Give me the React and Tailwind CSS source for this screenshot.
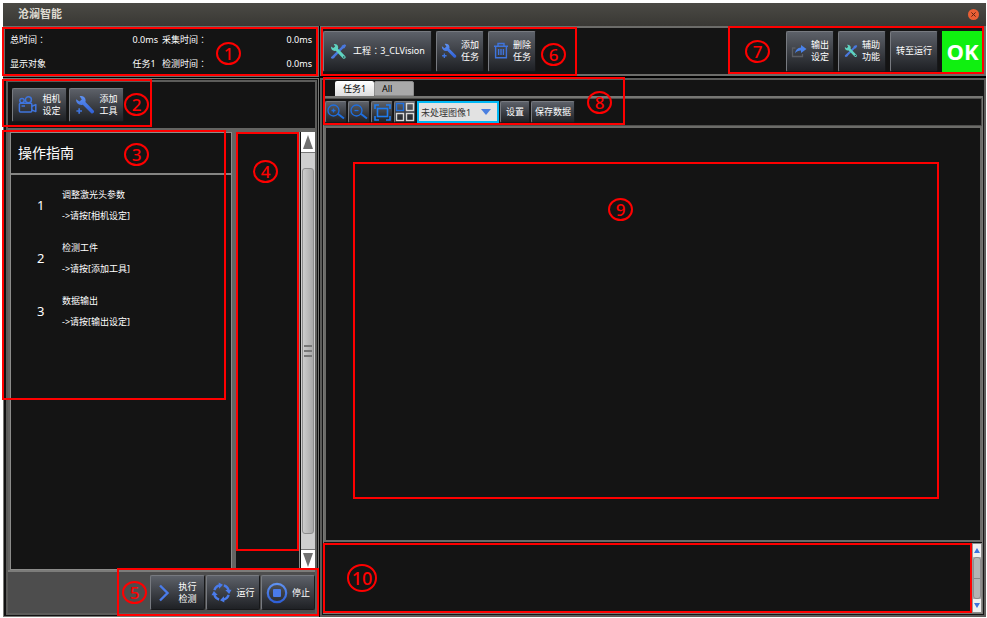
import React from "react";

const FONT = "font-['Noto_Sans','Noto_Sans_CJK_SC',sans-serif]";

/* ---------- icons ---------- */

function Blue({ id }) {
  return (
    <defs>
      <linearGradient id={id} x1="0" y1="0" x2="0" y2="1">
        <stop offset="0" stopColor="#5f92f2" />
        <stop offset="1" stopColor="#2f5fd6" />
      </linearGradient>
    </defs>
  );
}

function CameraIcon() {
  return (
    <svg viewBox="0 0 20 18" className="h-[18px] w-5 shrink-0" fill="none" stroke="#3f74dc" strokeWidth="1.5">
      <circle cx="4" cy="4.600" r="2.200" />
      <circle cx="10.400" cy="3.800" r="3" />
      <rect x="1.400" y="7.200" width="12.400" height="8.800" rx="1" />
      <path d="M13.800 10.200l4-1.600v7l-4-1.600" strokeLinejoin="round" />
      <path d="M3.500 10h3.500" />
    </svg>
  );
}

function WrenchIcon({ className, id }) {
  return (
    <svg viewBox="0 0 20 20" className={className}>
      <Blue id={id} />
      <path
        fill={`url(#${id})`}
        d="M1.2 4.2 4.4 6.6 6.8 4.4 4.6 1.1C7.4.4 10.3 1.8 10.6 5c.1.8 0 1.500-.2 2.100l8.200 8.300c1.600 1.700-.9 4.200-2.600 2.600L7.800 9.700C4.200 10.900.6 8 1.200 4.200z"
      />
      <path d="M4.200 13.200v5.600M1.400 16h5.600" stroke="#3f74dc" strokeWidth="1.700" />
    </svg>
  );
}

function ToolsIcon({ className }) {
  return (
    <svg viewBox="0 0 20 20" className={className}>
      <path d="M17.500 1.500 19 3l-2 3.200-1.600.4L6 16.200c-.8 2.300-4 2.900-4.800 1.400-.6-1.200 1-1.900 2.600-3.600l9.700-9.500.6-1.500z" fill="#4a78dd" />
      <path
        fill="#5fd3c0"
        d="M1.200 4.200 3.800 6 6 4 4.400 1.200C7 .6 9.300 2 9.600 4.800c.1.800 0 1.300-.2 1.900l8.400 8.500c1.900 2-.9 4.600-2.800 2.800L6.800 9.200C3.600 10.200.8 7.600 1.200 4.200z"
      />
      <circle cx="16.200" cy="16.400" r=".9" fill="#33363b" />
    </svg>
  );
}

function TrashIcon() {
  return (
    <svg viewBox="0 0 16 18" className="h-[18px] w-4 shrink-0" fill="none" stroke="#3f74dc" strokeWidth="1.400">
      <path d="M1 4.200h14M5 4V1.500h6V4M2.600 4.500v11.300h10.800V4.500M5.600 7v6M8 7v6M10.400 7v6" />
    </svg>
  );
}

function ExportIcon() {
  return (
    <svg viewBox="0 0 16 14" className="h-3.5 w-4 shrink-0" fill="none">
      <path d="M4.500 4H1.500v8.500h10V10" stroke="#5b5e64" strokeWidth="1.300" />
      <path d="M4 9.500C4.500 5.800 6.500 3.800 10 3.600V1l5.500 4-5.500 4V6.600C7.600 6.500 5.600 7.300 4 9.500z" fill="#4a82ea" />
    </svg>
  );
}

function ChevronIcon() {
  return (
    <svg viewBox="0 0 12 18" className="h-[18px] w-3 shrink-0" fill="none" stroke="#4a7bea" strokeWidth="2.400">
      <path d="M2 1.500 9.500 9 2 16.500" />
    </svg>
  );
}

function CycleIcon() {
  return (
    <svg viewBox="0 0 22 22" className="size-[21px] shrink-0" fill="none">
      <g stroke="#4a7bea" strokeWidth="2.400">
        <path d="M3.500 8.500A8 8 0 0 1 8.500 3.500" />
        <path d="M13.500 3.500A8 8 0 0 1 18.500 8.500" />
        <path d="M18.500 13.500A8 8 0 0 1 13.500 18.500" />
        <path d="M8.500 18.500A8 8 0 0 1 3.500 13.500" />
      </g>
      <g fill="#4a7bea">
        <path d="M8 .5 12.500 3 8.500 7z" />
        <path d="M21.500 8 19 12.500 15 8.500z" />
        <path d="M14 21.500 9.500 19 13.500 15z" />
        <path d="M.5 14 3 9.500 7 13.500z" />
      </g>
    </svg>
  );
}

function StopIcon() {
  return (
    <svg viewBox="0 0 22 22" className="size-[22px] shrink-0">
      <Blue id="stop" />
      <circle cx="11" cy="11" r="9.200" fill="none" stroke="url(#stop)" strokeWidth="2.200" />
      <rect x="7" y="7" width="8" height="8" rx="1" fill="#4a7bea" />
    </svg>
  );
}

function MagnifierIcon({ plus }) {
  return (
    <svg viewBox="0 0 18 16" className="h-4 w-[18px] shrink-0" fill="none" stroke="#1f6fe0" strokeWidth="1.300">
      <circle cx="6.500" cy="6.500" r="5.500" />
      <path d={plus ? "M4.500 6.500h4M6.500 4.500v4" : "M4.500 6.500h4"} />
      <path d="M10.800 9.800 17 14.500" strokeWidth="2" />
    </svg>
  );
}

function FitIcon() {
  return (
    <svg viewBox="0 0 17 17" className="size-[17px] shrink-0" fill="none" stroke="#1f7cf0" strokeWidth="1.600">
      <rect x="3.500" y="4.500" width="10" height="8" />
      <path d="M1 5V1H5M12 1h4V5M16 12v4H12M5 16H1V12" />
    </svg>
  );
}

function GridIcon() {
  return (
    <svg viewBox="0 0 20 20" className="size-5 shrink-0" fill="none" strokeWidth="1.400">
      <rect x="1.500" y="1.500" width="7" height="7" stroke="#1f6fe0" />
      <g stroke="#d8d8d8">
        <rect x="11.500" y="1.500" width="7" height="7" />
        <rect x="1.500" y="11.500" width="7" height="7" />
        <rect x="11.500" y="11.500" width="7" height="7" />
      </g>
    </svg>
  );
}

/* ---------- controls ---------- */

function Btn({ className = "", children, ...rest }) {
  return (
    <button
      type="button"
      className={`flex shrink-0 items-center justify-center rounded-[2px] border border-[#17181a] border-t-[#777a80] border-l-[#777a80] bg-linear-to-b from-[#5d6169] via-[#3d4046] to-[#1f2125] text-[9px] leading-3 text-white ${className}`}
      {...rest}
    >
      {children}
    </button>
  );
}

function TwoLine({ a, b }) {
  return (
    <span className="text-left">
      {a}
      <br />
      {b}
    </span>
  );
}

function Colon() {
  return <span className="font-['Noto_Sans_CJK_TC',sans-serif]">：</span>;
}

/* numbered red callout over a region */
function Callout({ n, box, spot, size = "h-[23px] w-[25px] text-[17px]" }) {
  return (
    <div className={`pointer-events-none absolute z-10 border-2 border-[#ff0000] ${box}`}>
      <span
        className={`absolute flex items-center justify-center rounded-[50%] border-2 border-[#ff0000] font-['Noto_Sans',sans-serif] font-medium leading-none text-[#ff0000] ${size} ${spot}`}
      >
        {n}
      </span>
    </div>
  );
}

/* ---------- panels ---------- */

const STEPS = [
  ["调整激光头参数", "->请按[相机设定]"],
  ["检测工件", "->请按[添加工具]"],
  ["数据输出", "->请按[输出设定]"],
];

function Status() {
  return (
    <section className="flex h-[51px] shrink-0 border-2 border-[#6c6c69] bg-[#141414] px-[5px] text-[9px] leading-6 text-white">
      <dl className="grid w-[148px] grid-cols-[1fr_auto]">
        <dt>总时间<Colon /></dt>
        <dd>0.0ms</dd>
        <dt>显示对象</dt>
        <dd>任务1</dd>
      </dl>
      <dl className="grid flex-1 grid-cols-[1fr_auto] pl-1">
        <dt>采集时间<Colon /></dt>
        <dd>0.0ms</dd>
        <dt>检测时间<Colon /></dt>
        <dd>0.0ms</dd>
      </dl>
    </section>
  );
}

function SideScroll() {
  return (
    <div className="flex w-[14px] shrink-0 flex-col bg-[#cfcfcf]">
      <button type="button" aria-label="向上" className="flex h-[21px] items-center justify-center border-b border-[#777] bg-white">
        <svg viewBox="0 0 10 14" className="h-3.5 w-2.5"><path d="M5 0l5 14H0z" fill="#707070" /></svg>
      </button>
      <div className="flex flex-1 flex-col px-px py-[15px]">
        <div className="flex flex-1 flex-col items-center justify-center gap-[3px] rounded-[3px] border border-[#8d8d8d] bg-linear-to-r from-[#cccccc] to-[#a9a9a9]">
          <i className="h-[2px] w-2 bg-[#777]" />
          <i className="h-[2px] w-2 bg-[#777]" />
          <i className="h-[2px] w-2 bg-[#777]" />
        </div>
      </div>
      <button type="button" aria-label="向下" className="flex h-[21px] items-center justify-center border-t border-[#777] bg-white">
        <svg viewBox="0 0 10 14" className="h-3.5 w-2.5"><path d="M5 14L0 0h10z" fill="#707070" /></svg>
      </button>
    </div>
  );
}

function Sidebar() {
  return (
    <aside className="relative flex w-[317px] shrink-0 flex-col gap-px pr-px">
      <Status />
      <div className="flex flex-1 flex-col border border-[#777774] bg-[#111] py-px pr-px pl-[2px]">
        <div className="flex flex-1 flex-col border-2 border-[#5c5c5a] bg-[#141414]">
          <div className="flex h-[46px] shrink-0 items-center gap-[2px] px-1">
            <Btn className="h-[34px] w-[55px] gap-1"><CameraIcon /><TwoLine a="相机" b="设定" /></Btn>
            <Btn className="h-[34px] w-[55px] gap-1">
              <WrenchIcon id="addTool" className="size-5 shrink-0" /><TwoLine a="添加" b="工具" />
            </Btn>
          </div>
          <div className="flex flex-1 border-t-4 border-l-2 border-[#646462]">
            <section className="flex-1 border border-[#8c8c8a] bg-[#141414] text-white">
              <h2 className="border-b-2 border-[#858583] px-[7px] text-[14px] leading-[40px]">操作指南</h2>
              <ol className="pt-[9px]">
                {STEPS.map(([title, hint], i) => (
                  <li key={title} className="mb-[11px] flex items-center">
                    <span className="w-[51px] pl-[26px] text-[13px] leading-[42px]">{i + 1}</span>
                    <p className="text-[9px] leading-[21px]">{title}<br />{hint}</p>
                  </li>
                ))}
              </ol>
            </section>
            <div className="w-1 shrink-0 bg-[#646462]" />
            <div className="mr-px w-[64px] shrink-0 border-r border-[#8c8c8a] bg-[#141414]" />
            <SideScroll />
          </div>
          <div className="flex h-[43px] shrink-0 items-center justify-end gap-px border-t-2 border-[#7c7c7a] bg-[#4d4d4d]">
            <Btn className="h-[35px] w-[55px] gap-2"><ChevronIcon /><TwoLine a="执行" b="检测" /></Btn>
            <Btn className="h-[35px] w-[54px] gap-1"><CycleIcon />运行</Btn>
            <Btn className="h-[35px] w-[54px] gap-1"><StopIcon />停止</Btn>
          </div>
        </div>
      </div>
      <Callout n="1" box="-left-px top-px h-[49px] w-[316px]" spot="left-[212px] top-[13px]" />
      <Callout n="2" box="-left-px top-[53px] h-[48px] w-[150px]" spot="left-[120px] top-3" />
      <Callout n="3" box="-left-px top-[104px] h-[270px] w-[224px]" spot="left-[120px] top-[11px]" />
      <Callout n="4" box="left-[233px] top-[106px] bottom-[66px] w-[63px]" spot="left-[15px] top-[26px]" />
      <Callout n="5" box="left-[114px] right-px bottom-px h-[48px]" spot="left-[3px] top-[11px]" />
    </aside>
  );
}

function TopBar() {
  return (
    <header className="flex h-[50px] shrink-0 items-center gap-1 border-2 border-[#6c6c69] bg-[#141414] px-px">
      <Btn className="h-[41px] w-[109px] gap-1.5">
        <ToolsIcon className="size-[17px] shrink-0" />
        <span className="whitespace-nowrap">工程<Colon />3_CLVision</span>
      </Btn>
      <Btn className="h-[41px] w-[48px] gap-1"><WrenchIcon id="addTask" className="size-4 shrink-0" /><TwoLine a="添加" b="任务" /></Btn>
      <Btn className="h-[41px] w-[48px] gap-1"><TrashIcon /><TwoLine a="删除" b="任务" /></Btn>
      <div className="flex-1" />
      <Btn className="h-[41px] w-[48px] gap-1"><ExportIcon /><TwoLine a="输出" b="设定" /></Btn>
      <Btn className="h-[41px] w-[48px] gap-1"><ToolsIcon className="size-[14px] shrink-0" /><TwoLine a="辅助" b="功能" /></Btn>
      <Btn className="h-[41px] w-[48px]">转至运行</Btn>
      <output className="flex h-[41px] w-[41px] shrink-0 items-center justify-center bg-[#10f010] font-['Open_Sans',sans-serif] text-[22px] font-bold text-white">OK</output>
    </header>
  );
}

function LogScroll() {
  return (
    <div className="flex w-[9px] shrink-0 flex-col border-l border-[#999] bg-[#b4b4b4]">
      <button type="button" aria-label="日志向上" className="flex h-[13px] items-center justify-center bg-[#efefef]">
        <svg viewBox="0 0 6 5" className="h-[5px] w-1.5"><path d="M3 0l3 5H0z" fill="#3f74dc" /></svg>
      </button>
      <div className="flex flex-1 items-center rounded-[3px] border border-[#8d8d8d]">
        <i className="h-px w-full bg-[#888]" />
      </div>
      <button type="button" aria-label="日志向下" className="flex h-[13px] items-center justify-center bg-[#efefef]">
        <svg viewBox="0 0 6 5" className="h-[5px] w-1.5"><path d="M3 5L0 0h6z" fill="#3f74dc" /></svg>
      </button>
    </div>
  );
}

function Workspace() {
  return (
    <main className="relative flex min-w-0 flex-1 flex-col gap-[2px]">
      <TopBar />
      <div className="flex flex-1 flex-col border-2 border-[#5c5c5a] bg-[#141414] p-px">
        <div role="tablist" className="flex h-[15px] shrink-0 pl-3 text-[9px] leading-none text-black">
          <button type="button" role="tab" aria-selected="true" className="w-[39px] rounded-t-[2px] bg-linear-to-b from-white to-[#dedede]">任务1</button>
          <button type="button" role="tab" aria-selected="false" className="w-[40px] rounded-t-[2px] border border-[#8d8d8d] bg-[#a9a9a9] pl-[7px] text-left">All</button>
        </div>
        <div className="flex flex-1 flex-col border border-t-2 border-[#777774]">
          <div className="flex h-[28px] shrink-0 items-center gap-px border border-[#50504e]">
            <Btn aria-label="放大" className="h-[22px] w-[22px]"><MagnifierIcon plus /></Btn>
            <Btn aria-label="缩小" className="h-[22px] w-[22px]"><MagnifierIcon /></Btn>
            <Btn aria-label="适应窗口" className="h-[22px] w-[22px]"><FitIcon /></Btn>
            <Btn aria-label="分屏" className="h-[22px] w-[22px]"><GridIcon /></Btn>
            <div className="relative shrink-0">
              <select aria-label="图像" className="block h-[22px] w-[82px] appearance-none border-2 border-[#00b8f5] bg-[#e2e2e2] pl-[2px] text-[9px] leading-none text-[#333]">
                <option>未处理图像1</option>
              </select>
              <svg viewBox="0 0 10 6" className="pointer-events-none absolute right-2 top-2 h-1.5 w-2.5"><path d="M0 0h10L5 6z" fill="#4a7fe0" /></svg>
            </div>
            <Btn className="h-[22px] w-[30px]">设置</Btn>
            <Btn className="h-[22px] w-[44px]">保存数据</Btn>
          </div>
          <div className="flex-1 border-2 border-[#6c6c69] bg-[#141414]" />
          <div className="mt-px flex h-[70px] shrink-0 border border-[#8c8c8a]">
            <div className="flex-1 bg-[#141414]" />
            <LogScroll />
          </div>
        </div>
      </div>
      <Callout n="6" box="left-px top-px h-[49px] w-[256px]" spot="left-[218px] top-3.5" />
      <Callout n="7" box="right-[2px] top-0 h-[48px] w-[256px]" spot="left-[15px] top-3" />
      <Callout n="8" box="left-[3px] top-[51px] h-[48px] w-[302px]" spot="left-[262px] top-3" />
      <Callout n="9" box="left-[33px] top-[136px] right-[47px] bottom-[118px]" spot="left-[253px] top-[34px]" />
      <Callout n="10" box="left-[3px] right-[14px] bottom-1 h-[70px]" spot="left-[22px] top-[19px]" size="h-[28px] w-[30px] text-[18px]" />
    </main>
  );
}

export default function App() {
  return (
    <div className={`flex min-h-screen flex-col bg-white pt-[3px] pr-px pb-px pl-[3px] ${FONT}`}>
      <div className="flex flex-1 flex-col bg-black">
        <div className="flex h-[23px] shrink-0 items-center justify-between bg-linear-to-b from-[#4b4a45] to-[#393834] pl-[15px] pr-[7px]">
          <h1 className="text-[11px] font-bold text-[#dfdbd2]">沧澜智能</h1>
          <button type="button" aria-label="关闭" className="flex size-[11px] items-center justify-center rounded-full bg-[#ea5f35]">
            <svg viewBox="0 0 6 6" className="size-[5px]" stroke="#5a2413" strokeWidth="1.200"><path d="M.5.5l5 5M5.500.5l-5 5" /></svg>
          </button>
        </div>
        <div className="flex flex-1">
          <Sidebar />
          <Workspace />
        </div>
      </div>
    </div>
  );
}
